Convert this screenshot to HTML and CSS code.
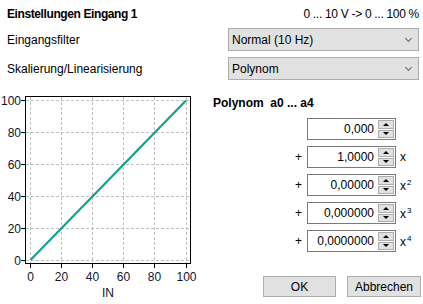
FILE: index.html
```html
<!DOCTYPE html>
<html lang="de">
<head>
    <meta charset="UTF-8">
    <title>Einstellungen Eingang 1</title>
    <link rel="stylesheet" href="styles.css">
</head>
<body>
    <div class="dialog">
        <div class="header">
            <span class="title">Einstellungen Eingang 1</span>
            <span class="range">0 ... 10 V -&gt; 0 ... 100 %</span>
        </div>

        <div class="fields">
            <div class="field">
                <label>Eingangsfilter</label>
                <div class="combo"><span>Normal (10 Hz)</span><i class="chevron"></i></div>
            </div>
            <div class="field">
                <label>Skalierung/Linearisierung</label>
                <div class="combo"><span>Polynom</span><i class="chevron"></i></div>
            </div>
        </div>

        <div class="main">
            <!-- Kennlinie -->
            <svg class="chart" width="200" height="214" viewBox="0 0 200 214">
                <g class="grid">
                    <line x1="30.5" y1="7" x2="30.5" y2="173"/>
                    <line x1="61.5" y1="7" x2="61.5" y2="173"/>
                    <line x1="92.5" y1="7" x2="92.5" y2="173"/>
                    <line x1="123.5" y1="7" x2="123.5" y2="173"/>
                    <line x1="154.5" y1="7" x2="154.5" y2="173"/>
                    <line x1="186.5" y1="7" x2="186.5" y2="173"/>
                    <line x1="26" y1="170.5" x2="190" y2="170.5"/>
                    <line x1="26" y1="138.5" x2="190" y2="138.5"/>
                    <line x1="26" y1="106.5" x2="190" y2="106.5"/>
                    <line x1="26" y1="74.5" x2="190" y2="74.5"/>
                    <line x1="26" y1="42.5" x2="190" y2="42.5"/>
                    <line x1="26" y1="10.5" x2="190" y2="10.5"/>
                </g>
                <rect class="frame" x="25.5" y="6.5" width="165" height="167"/>
                <g class="ticks">
                    <line x1="21" y1="170.5" x2="25" y2="170.5"/>
                    <line x1="21" y1="138.5" x2="25" y2="138.5"/>
                    <line x1="21" y1="106.5" x2="25" y2="106.5"/>
                    <line x1="21" y1="74.5" x2="25" y2="74.5"/>
                    <line x1="21" y1="42.5" x2="25" y2="42.5"/>
                    <line x1="21" y1="10.5" x2="25" y2="10.5"/>
                    <line x1="30.5" y1="174" x2="30.5" y2="178"/>
                    <line x1="61.5" y1="174" x2="61.5" y2="178"/>
                    <line x1="92.5" y1="174" x2="92.5" y2="178"/>
                    <line x1="123.5" y1="174" x2="123.5" y2="178"/>
                    <line x1="154.5" y1="174" x2="154.5" y2="178"/>
                    <line x1="186.5" y1="174" x2="186.5" y2="178"/>
                </g>
                <polyline class="curve" points="30.5,170 186,10.5"/>
                <g class="ylabels">
                    <text x="21" y="175">0</text>
                    <text x="21" y="143">20</text>
                    <text x="21" y="111">40</text>
                    <text x="21" y="79">60</text>
                    <text x="21" y="47">80</text>
                    <text x="21" y="15">100</text>
                </g>
                <g class="xlabels">
                    <text x="30.5" y="191">0</text>
                    <text x="61.5" y="191">20</text>
                    <text x="92.5" y="191">40</text>
                    <text x="123.5" y="191">60</text>
                    <text x="154.5" y="191">80</text>
                    <text x="186.5" y="191">100</text>
                    <text x="108" y="207">IN</text>
                </g>
            </svg>

            <div class="poly">
                <div class="poly-title">Polynom&nbsp; a0 ... a4</div>

                <div class="coeffs">
                    <div class="coeff">
                        <span class="plus"></span>
                        <div class="spin"><span class="value">0,000</span><span class="arrows"><b class="up"></b><b class="down"></b></span></div>
                        <span class="power"></span>
                    </div>
                    <div class="coeff">
                        <span class="plus">+</span>
                        <div class="spin"><span class="value">1,0000</span><span class="arrows"><b class="up"></b><b class="down"></b></span></div>
                        <span class="power">x</span>
                    </div>
                    <div class="coeff">
                        <span class="plus">+</span>
                        <div class="spin"><span class="value">0,00000</span><span class="arrows"><b class="up"></b><b class="down"></b></span></div>
                        <span class="power">x<sup>2</sup></span>
                    </div>
                    <div class="coeff">
                        <span class="plus">+</span>
                        <div class="spin"><span class="value">0,000000</span><span class="arrows"><b class="up"></b><b class="down"></b></span></div>
                        <span class="power">x<sup>3</sup></span>
                    </div>
                    <div class="coeff">
                        <span class="plus">+</span>
                        <div class="spin"><span class="value">0,0000000</span><span class="arrows"><b class="up"></b><b class="down"></b></span></div>
                        <span class="power">x<sup>4</sup></span>
                    </div>
                </div>

                <div class="buttons">
                    <button class="ok">OK</button>
                    <button class="cancel">Abbrechen</button>
                </div>
            </div>
        </div>
    </div>
</body>
</html>
```

FILE: styles.css
```css
/* Reset */
* {
    margin: 0;
    padding: 0;
    box-sizing: border-box;
}

body {
    font-family: "Liberation Sans", Arial, sans-serif;
    font-size: 12px;
    color: #000;
    background-color: #fff;
}

.dialog {
    width: 423px;
    height: 304px;
    overflow: hidden;
}

/* Kopfzeile */
.header {
    height: 27px;
    display: flex;
    align-items: center;
    justify-content: space-between;
    padding: 0 4px 0 7px;
}

.title {
    font-weight: bold;
    letter-spacing: -0.4px;
}

.range {
    letter-spacing: -0.3px;
}

/* Auswahlfelder */
.fields {
    display: flex;
    flex-direction: column;
    gap: 6px;
    padding-top: 1px;
}

.field {
    display: flex;
    align-items: center;
    justify-content: space-between;
    padding: 0 4px 0 7px;
}

.combo {
    width: 191px;
    height: 23px;
    border: 1px solid #adadad;
    background-color: #e1e1e1;
    display: flex;
    align-items: center;
    justify-content: space-between;
    padding: 0 7px 0 3px;
}

.chevron {
    width: 5px;
    height: 5px;
    border-right: 1px solid #666;
    border-bottom: 1px solid #666;
    transform: rotate(45deg);
    margin-top: -3px;
}

/* Diagramm + Polynom */
.main {
    display: flex;
    margin-top: 10px;
}

.chart {
    flex: none;
    display: block;
}

.grid line {
    stroke: #c0c0c0;
    stroke-width: 1;
    stroke-dasharray: 3 2;
}

.frame {
    fill: none;
    stroke: #000;
    stroke-width: 1;
}

.ticks line {
    stroke: #000;
    stroke-width: 1;
}

.curve {
    fill: none;
    stroke: #12a08f;
    stroke-width: 2.2;
}

.chart text {
    font-family: "Liberation Sans", Arial, sans-serif;
    font-size: 12px;
    fill: #141428;
}

.ylabels text {
    text-anchor: end;
}

.xlabels text {
    text-anchor: middle;
}

.poly {
    flex: 1;
    display: flex;
    flex-direction: column;
}

.poly-title {
    font-weight: bold;
    line-height: 14px;
    margin: 6px 0 0 13px;
}

.coeffs {
    display: flex;
    flex-direction: column;
    gap: 6px;
    margin-top: 8px;
}

.coeff {
    display: flex;
    align-items: center;
    height: 22px;
    margin-left: 95px;
}

.plus {
    width: 12px;
}

.spin {
    width: 89px;
    height: 22px;
    border: 1px solid #7a7a7a;
    display: flex;
    align-items: stretch;
}

.value {
    flex: 1;
    text-align: right;
    line-height: 20px;
    padding-right: 4px;
}

.arrows {
    width: 17px;
    display: flex;
    flex-direction: column;
    gap: 1px;
    padding: 1px 1px 1px 0;
}

.arrows b {
    flex: 1;
    border: 1px solid #adadad;
    background-color: #e1e1e1;
    display: flex;
    align-items: center;
    justify-content: center;
}

.arrows b::after {
    content: "";
    border-left: 3px solid transparent;
    border-right: 3px solid transparent;
}

.arrows .up::after {
    border-bottom: 3px solid #000;
}

.arrows .down::after {
    border-top: 3px solid #000;
}

.power {
    margin-left: 4px;
}

.power sup {
    font-size: 8px;
    vertical-align: 5px;
    margin-left: 1px;
}

/* Schaltflächen */
.buttons {
    display: flex;
    justify-content: flex-end;
    gap: 11px;
    margin-top: 24px;
    padding-right: 2px;
}

button {
    height: 21px;
    border: 1px solid #adadad;
    background-color: #e1e1e1;
    font-family: inherit;
    font-size: 12px;
    color: #000;
}

.ok {
    width: 73px;
}

.cancel {
    width: 74px;
}
```
